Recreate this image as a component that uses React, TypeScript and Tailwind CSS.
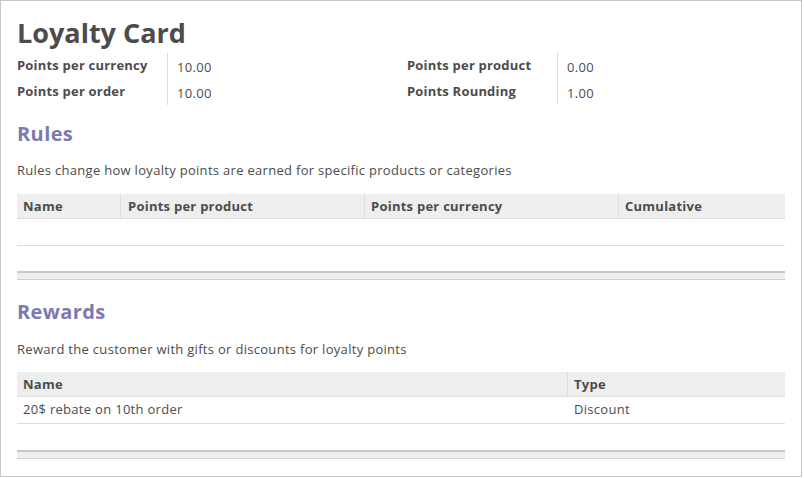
import React from "react";

const font = { fontFamily: '"Open Sans", "DejaVu Sans", sans-serif' };

function Field({ label, value }: { label: string; value: string }) {
  return (
    <div className="flex h-[26px]">
      <div className="w-[150px] font-bold text-[13px] leading-[24px] tracking-[0.2px]">{label}</div>
      <div className="border-l border-[#dddddd] pl-[9px] text-[13px] leading-[26px] pt-[1px] tracking-[0.3px]">{value}</div>
    </div>
  );
}

function Footer() {
  return <div className="h-[9px] border-t-2 border-t-[#c9c9c9] border-b border-b-[#d0d0d0] bg-[#eeeeee]" />;
}

export default function App() {
  return (
    <div className="bg-white" style={font}>
      <div className="w-[802px] h-[477px] border border-[#c8c8c8] px-4 pt-[16px] text-[#4c4c4c]">
        <h1 className="text-[27px] font-bold leading-[32px]">Loyalty Card</h1>
        <div className="mt-[4px] grid grid-cols-[390px_1fr]">
          <div>
            <Field label="Points per currency" value="10.00" />
            <Field label="Points per order" value="10.00" />
          </div>
          <div>
            <Field label="Points per product" value="0.00" />
            <Field label="Points Rounding" value="1.00" />
          </div>
        </div>

        <h2 className="mt-[15px] text-[20px] font-bold leading-[28px] tracking-[0.4px] text-[#7c7bad]">Rules</h2>
        <p className="mt-[12px] text-[13px] leading-[20px] tracking-[0.3px]">
          Rules change how loyalty points are earned for specific products or categories
        </p>
        <div className="mt-[14px]">
          <div className="flex h-[25px] bg-[#eeeeee] border-b border-[#dddddd] text-[13px] font-bold leading-[24px] tracking-[0.25px]">
            <div className="w-[103px] pl-[6px]">Name</div>
            <div className="w-[244px] pl-[7px] border-l border-[#dddddd]">Points per product</div>
            <div className="w-[254px] pl-[6px] border-l border-[#dddddd]">Points per currency</div>
            <div className="flex-1 pl-[6px] border-l border-[#dddddd]">Cumulative</div>
          </div>
          <div className="h-[27px] border-b border-[#dddddd]" />
          <div className="h-[25px]" />
          <Footer />
        </div>

        <h2 className="mt-[18px] text-[20px] font-bold leading-[28px] tracking-[0.4px] text-[#7c7bad]">Rewards</h2>
        <p className="mt-[13px] text-[13px] leading-[20px] tracking-[0.3px]">
          Reward the customer with gifts or discounts for loyalty points
        </p>
        <div className="mt-[13px]">
          <div className="flex h-[25px] bg-[#eeeeee] border-b border-[#dddddd] text-[13px] font-bold leading-[24px] tracking-[0.25px]">
            <div className="w-[550px] pl-[6px]">Name</div>
            <div className="flex-1 pl-[6px] border-l border-[#dddddd]">Type</div>
          </div>
          <div className="flex h-[27px] border-b border-[#dddddd] text-[13px] leading-[25px] tracking-[0.3px]">
            <div className="w-[550px] pl-[6px]">20$ rebate on 10th order</div>
            <div className="flex-1 pl-[7px]">Discount</div>
          </div>
          <div className="h-[26px]" />
          <Footer />
        </div>
      </div>
    </div>
  );
}
